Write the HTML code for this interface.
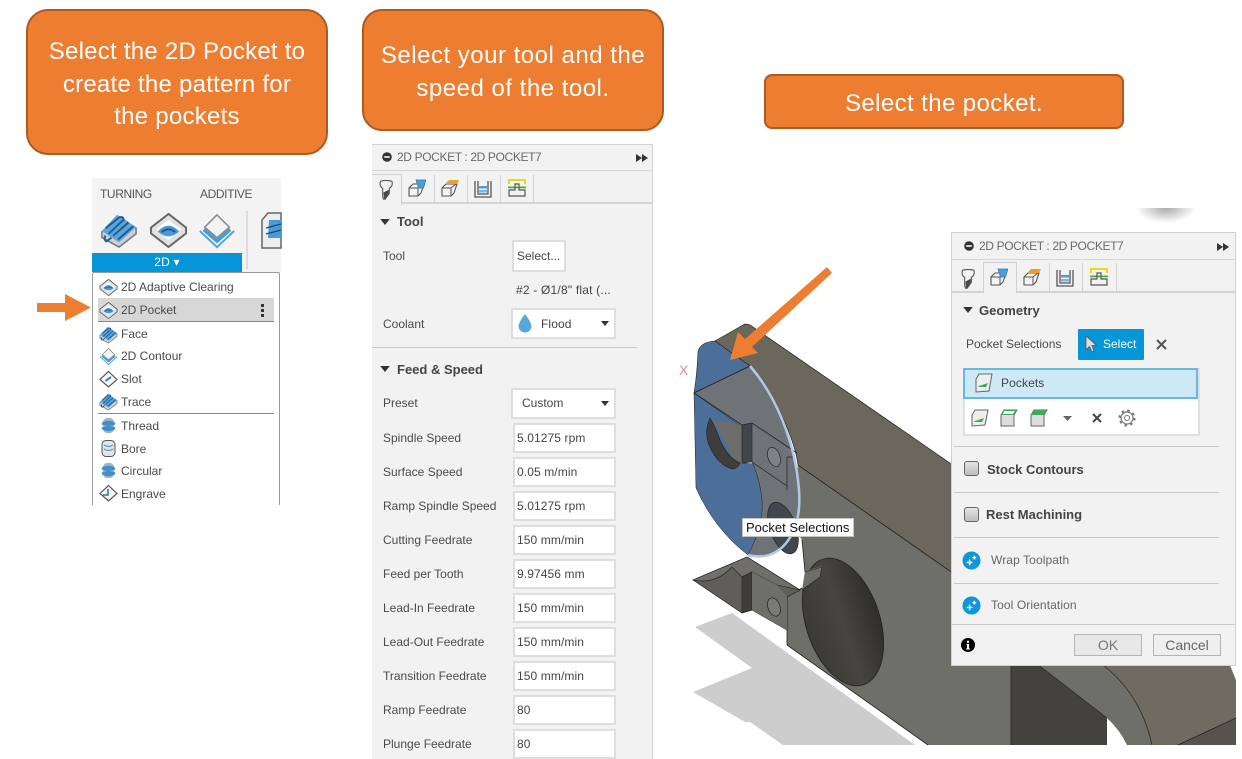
<!DOCTYPE html>
<html><head><meta charset="utf-8"><style>
html,body{margin:0;padding:0;background:#fff}
#p{position:relative;width:1242px;height:759px;overflow:hidden;background:#fff;font-family:"Liberation Sans",sans-serif}
#p div{position:absolute;box-sizing:border-box}
.c{background:#ed7d31;border:2px solid #ad5a22;color:#fff;font-size:24px;line-height:32.5px;text-align:center;letter-spacing:.25px}
.t{font-size:12px;line-height:14px;color:#4a4a4a;white-space:nowrap}
.m{font-size:12px;line-height:14px;color:#4a4a4a;white-space:nowrap;left:121px}
.b{font-weight:bold;font-size:13px;line-height:15px;color:#444;white-space:nowrap}
.i{left:513px;width:103px;height:30px;background:#fff;border:2px solid #dedede;font-size:12px;line-height:26px;color:#444;padding-left:2px;letter-spacing:.1px}
.l{background:#c8c8c8;height:1px}
.tb{font-size:12px;line-height:14px;color:#555;white-space:nowrap;letter-spacing:-.4px}
.h{font-size:12px;line-height:14px;color:#6a6a6a;white-space:nowrap;letter-spacing:-.37px}
svg{position:absolute;overflow:visible}
</style></head><body><div id="p">

<svg width="0" height="0" style="left:0;top:0"><defs>
<symbol id="hex" viewBox="0 0 20 20"><path d="M10 1.500L19 8.500V11.500L10 18.500L1 11.500V8.500Z" fill="#e2e2e2" stroke="#666" stroke-width="1"/><path d="M10 4.500L16.500 9.500L10 15L3.500 9.500Z" fill="#fafafa"/><path d="M4.500 10.500Q10 4.500 15.500 10.500Q10 15.500 4.500 10.500Z" fill="#4a9ad8"/><path d="M6.500 10.800Q10 8 13.500 10.800" fill="none" stroke="#1c5d8d" stroke-width="1"/></symbol>
<symbol id="hatch" viewBox="0 0 20 20"><path d="M1 11L10 3L19 9V12L10 19L1 14Z" fill="#d0d0d0" stroke="#777" stroke-width=".8"/><path d="M1 10.500L9 2L19 8.500L10 16.500Z" fill="#5aa5de"/><path d="M3 9L10 3.500Q12 2.500 12.500 4.500L4.500 12M7 13L15 6M9.500 15L17.500 8M3 13Q1.500 15 3.500 16L6 14" stroke="#1c5d8d" stroke-width="1" fill="none"/></symbol>
<symbol id="cont" viewBox="0 0 20 20"><path d="M1 10L10 18.500L19 10" fill="none" stroke="#4aa5e6" stroke-width="1"/><path d="M10 1.500L16.500 8L10 13.500L3.500 8Z" fill="#f3f3f3" stroke="#888" stroke-width=".8"/><path d="M3.500 8.500L10 14L16.500 8.500L17.500 10L10 16.500L2.500 10Z" fill="#4a9ad8"/></symbol>
<symbol id="thr" viewBox="0 0 20 20"><rect x="4" y="2" width="12" height="16" rx="5" fill="#a4b4c0"/><path d="M3 7Q10 3 17 7V9Q10 12 3 9ZM3 12Q10 9 17 12V14Q10 18 3 14Z" fill="#3f8fce"/></symbol>
<symbol id="tool" viewBox="0 0 24 24"><path d="M5.500 1.500Q12 -.5 19 1.500Q20.500 5 18 8.500L16 10V16L11 23H9L8 20V10L6 8.500Q4 5 5.500 1.500Z" fill="#f2f2f2" stroke="#555" stroke-width="1.300"/><path d="M9 15L15.500 11.500V16L11 22.500H9.500Z" fill="#4a4a4a"/></symbol>
<symbol id="geo" viewBox="0 0 18 18"><path d="M1 9L5 5H16L13 14L10 17H1Z" fill="#f4f4f4" stroke="#555" stroke-width="1.100"/><path d="M1 9H10V17M10 9L15 4" fill="none" stroke="#555" stroke-width="1"/><path d="M8 1H18L15.500 9L10.500 9Z" fill="#4c9ed9" stroke="#2b77b1" stroke-width=".7"/></symbol>
<symbol id="hgt" viewBox="0 0 18 18"><path d="M1 9L5 5H16L13 14L10 17H1Z" fill="#f4f4f4" stroke="#555" stroke-width="1.100"/><path d="M1 9H10V17M10 9L15 5" fill="none" stroke="#555" stroke-width="1"/><path d="M4 5L8 1H18L16 5Z" fill="#ee9f2b"/></symbol>
<symbol id="pas" viewBox="0 0 18 18"><path d="M1 1V17H17V1M4 1V14H14V1" fill="none" stroke="#555" stroke-width="1.300"/><rect x="5" y="6" width="8" height="2.500" fill="#4c9ed9"/><rect x="5" y="10" width="8" height="2.500" fill="#7fb4dc"/></symbol>
<symbol id="lnk" viewBox="0 0 18 18"><path d="M1 5V1H17V5" fill="none" stroke="#e6d800" stroke-width="1.800"/><rect x="0" y="7.500" width="18" height="1.800" fill="#52a849"/><path d="M1 11H7V5H11V11H17V17H1Z" fill="none" stroke="#555" stroke-width="1.200"/></symbol>
<symbol id="tri" viewBox="0 0 8 5"><path d="M0 0H8L4 5Z" fill="#333"/></symbol>
<symbol id="plus" viewBox="0 0 20 20"><circle cx="10" cy="10" r="9.500" fill="#0f96d9"/><path d="M8 9V15M5 12H11M13 5V9M11 7H15" stroke="#fff" stroke-width="1.500"/></symbol>
</defs></svg>

<!-- callouts -->
<div class="c" style="left:26px;top:9px;width:302px;height:146px;border-radius:22px;padding-top:25px">Select the 2D Pocket to<br>create the pattern for<br>the pockets</div>
<div class="c" style="left:362px;top:9px;width:302px;height:122px;border-radius:20px;padding-top:29px;letter-spacing:.5px">Select your tool and the<br>speed of the tool.</div>
<div class="c" style="left:764px;top:74px;width:360px;height:55px;border-radius:8px;padding-top:12px;letter-spacing:.4px">Select the pocket.</div>

<!-- toolbar -->
<div style="left:92px;top:178px;width:189px;height:95px;background:#f3f3f3"></div>
<div class="tb" style="left:100px;top:187px">TURNING</div>
<div class="tb" style="left:200px;top:187px">ADDITIVE</div>
<svg style="left:100px;top:211px" width="38" height="38"><use href="#hatch" width="38" height="38"/></svg>
<svg style="left:149px;top:211px" width="39" height="39"><use href="#hex" width="39" height="39"/></svg>
<svg style="left:198px;top:212px" width="38" height="38"><use href="#cont" width="38" height="38"/></svg>
<div style="left:246px;top:211px;width:2px;height:58px;background:#ddd"></div>
<svg style="left:260px;top:212px;width:21px;height:36px" viewBox="0 0 21 36"><path d="M8 1H21V36H2V8Z" fill="#eee" stroke="#666" stroke-width="1.500"/><path d="M9 8H21V26H8Z" fill="#4a9ad8"/><path d="M6 16L21 12M6 22L21 18" stroke="#1c4a70" stroke-width="1.200"/></svg>
<div style="left:92px;top:253px;width:150px;height:19px;background:#0696d7;color:#fff;font-size:12px;line-height:19px;text-align:center;letter-spacing:.2px">2D ▾</div>
<div style="left:92px;top:272px;width:188px;height:233px;background:#fff;border:1px solid #9a9a9a;border-bottom:none;border-radius:2px 2px 0 0"></div>
<div style="left:98px;top:298px;width:176px;height:24px;background:#d7d7d7;border-bottom:1px solid #888"></div>
<svg style="left:261px;top:304px" width="3" height="14"><path d="M0 0h3v3H0zM0 5h3v3H0zM0 10h3v3H0z" fill="#333"/></svg>
<div class="l" style="left:98px;top:413px;width:176px;background:#888"></div>
<div class="m" style="top:280px">2D Adaptive Clearing</div>
<div class="m" style="top:303px">2D Pocket</div>
<div class="m" style="top:327px">Face</div>
<div class="m" style="top:349px">2D Contour</div>
<div class="m" style="top:372px">Slot</div>
<div class="m" style="top:395px">Trace</div>
<div class="m" style="top:419px">Thread</div>
<div class="m" style="top:442px">Bore</div>
<div class="m" style="top:464px">Circular</div>
<div class="m" style="top:487px">Engrave</div>
<svg style="left:99px;top:278px" width="19" height="19"><use href="#hex" width="19" height="19"/></svg>
<svg style="left:99px;top:301px" width="19" height="19"><use href="#hex" width="19" height="19"/></svg>
<svg style="left:99px;top:325px" width="19" height="19"><use href="#hatch" width="19" height="19"/></svg>
<svg style="left:99px;top:347px" width="19" height="19"><use href="#cont" width="19" height="19"/></svg>
<svg style="left:99px;top:370px" width="19" height="19"><path d="M9.500 1.500L18 9.500L9.500 17L1 9.500Z" fill="#f5f5f5" stroke="#555" stroke-width="1.200"/><path d="M6.500 11L12 7" stroke="#2d7fbf" stroke-width="2"/></svg>
<svg style="left:99px;top:392px" width="19" height="19"><use href="#hatch" width="19" height="19"/></svg>
<svg style="left:99px;top:416px" width="19" height="19"><use href="#thr" width="19" height="19"/></svg>
<svg style="left:99px;top:439px" width="19" height="19"><rect x="3" y="1.500" width="13" height="16" rx="4" fill="#dfe4e8" stroke="#555"/><path d="M5 6Q9.500 9 14 6M5 10Q9.500 13 14 10" stroke="#4a9ad8" stroke-width="1.200" fill="none"/></svg>
<svg style="left:99px;top:461px" width="19" height="19"><use href="#thr" width="19" height="19"/></svg>
<svg style="left:99px;top:484px" width="19" height="19"><path d="M9.500 1.500L18 9.500L9.500 17L1 9.500Z" fill="#f5f5f5" stroke="#555" stroke-width="1.200"/><path d="M9 5V11H4" stroke="#2d6fa8" stroke-width="1.500" fill="none"/></svg>
<svg style="left:37px;top:294px" width="55" height="27"><path d="M0 9H28V0L54 13.500L28 27V18H0Z" fill="#ed7d31"/></svg>

<!-- middle panel -->
<div style="left:372px;top:144px;width:281px;height:620px;background:#f2f2f2;border:1px solid #d2d2d2;border-left:none"></div>
<div style="left:372px;top:170px;width:280px;height:1px;background:#d6d6d6"></div>
<svg style="left:382px;top:152px" width="10" height="10"><circle cx="5" cy="5" r="4.800" fill="#333"/><rect x="2.300" y="4.200" width="5.400" height="1.600" fill="#fff"/></svg>
<div class="h" style="left:397px;top:150px">2D POCKET : 2D POCKET7</div>
<svg style="left:636px;top:154px" width="12" height="8"><path d="M0 0L6 4L0 8ZM6 0L12 4L6 8Z" fill="#333"/></svg>
<div style="left:372px;top:202px;width:280px;height:2px;background:#d4d4d4"></div>
<div style="left:372px;top:174px;width:30px;height:31px;background:#f2f2f2;border:1px solid #d0d0d0;border-bottom:none;border-left:none"></div>
<div style="left:434px;top:175px;width:1px;height:27px;background:#d4d4d4"></div>
<div style="left:467px;top:175px;width:1px;height:27px;background:#d4d4d4"></div>
<div style="left:500px;top:175px;width:1px;height:27px;background:#d4d4d4"></div>
<div style="left:533px;top:175px;width:1px;height:27px;background:#d4d4d4"></div>
<svg style="left:376px;top:180px" width="20" height="20"><use href="#tool" width="20" height="20"/></svg>
<svg style="left:408px;top:179px" width="18" height="18"><use href="#geo" width="18" height="18"/></svg>
<svg style="left:441px;top:179px" width="18" height="18"><use href="#hgt" width="18" height="18"/></svg>
<svg style="left:474px;top:180px" width="18" height="18"><use href="#pas" width="18" height="18"/></svg>
<svg style="left:508px;top:179px" width="18" height="18"><use href="#lnk" width="18" height="18"/></svg>

<svg style="left:380px;top:219px" width="10" height="6"><use href="#tri" width="10" height="6"/></svg>
<div class="b" style="left:397px;top:214px">Tool</div>
<div class="t" style="left:383px;top:249px">Tool</div>
<div class="i" style="left:512px;top:240px;width:54px;height:32px;line-height:28px;padding-left:3px;letter-spacing:0">Select...</div>
<div class="t" style="left:516px;top:283px;color:#444;letter-spacing:.2px">#2 - Ø1/8" flat (...</div>
<div class="t" style="left:383px;top:317px">Coolant</div>
<div class="i" style="left:511px;top:308px;width:105px;height:31px;line-height:28px;padding-left:28px">Flood</div>
<svg style="left:518px;top:314px" width="14" height="19"><path d="M7 0Q13 8 13.500 12A6.500 6.500 0 0 1 .5 12Q1 8 7 0Z" fill="#58a6dc"/></svg>
<svg style="left:601px;top:321px" width="8" height="5"><use href="#tri" width="8" height="5"/></svg>
<div class="l" style="left:372px;top:347px;width:265px"></div>
<svg style="left:380px;top:366px" width="10" height="6"><use href="#tri" width="10" height="6"/></svg>
<div class="b" style="left:397px;top:362px">Feed &amp; Speed</div>

<div class="t" style="left:383px;top:396px">Preset</div>
<div class="i" style="left:511px;top:388px;width:105px;height:31px;line-height:27px;padding-left:9px;letter-spacing:0">Custom</div>
<svg style="left:601px;top:401px" width="8" height="5"><use href="#tri" width="8" height="5"/></svg>
<div class="t" style="left:383px;top:431px">Spindle Speed</div><div class="i" style="top:423px">5.01275 rpm</div>
<div class="t" style="left:383px;top:465px">Surface Speed</div><div class="i" style="top:457px">0.05 m/min</div>
<div class="t" style="left:383px;top:499px">Ramp Spindle Speed</div><div class="i" style="top:491px">5.01275 rpm</div>
<div class="t" style="left:383px;top:533px">Cutting Feedrate</div><div class="i" style="top:525px">150 mm/min</div>
<div class="t" style="left:383px;top:567px">Feed per Tooth</div><div class="i" style="top:559px">9.97456 mm</div>
<div class="t" style="left:383px;top:601px">Lead-In Feedrate</div><div class="i" style="top:593px">150 mm/min</div>
<div class="t" style="left:383px;top:635px">Lead-Out Feedrate</div><div class="i" style="top:627px">150 mm/min</div>
<div class="t" style="left:383px;top:669px">Transition Feedrate</div><div class="i" style="top:661px">150 mm/min</div>
<div class="t" style="left:383px;top:703px">Ramp Feedrate</div><div class="i" style="top:695px">80</div>
<div class="t" style="left:383px;top:737px">Plunge Feedrate</div><div class="i" style="top:729px">80</div>

<!-- model -->
<svg style="left:0;top:0" width="1242" height="759">
<defs><radialGradient id="sh"><stop offset="0" stop-color="#aaa"/><stop offset="1" stop-color="#fff"/></radialGradient>
<linearGradient id="hl" x1="0" y1="0" x2="1" y2="0"><stop offset="0" stop-color="#3b3a36"/><stop offset=".5" stop-color="#46453f"/><stop offset="1" stop-color="#2f2e2a"/></linearGradient></defs>
<ellipse cx="1166" cy="208" rx="30" ry="15" fill="url(#sh)"/><rect x="1130" y="190" width="80" height="18" fill="#fff"/>
<path d="M695 627L732 613L915 745H783L750 722L745 722L693 692L752 668Z" fill="#cdcdcd"/>
<!-- side face -->
<path d="M798 465L960 578V665H1011V745H928L787 645V597L802 588L820 577L822 567L805 572L802 540L790 520Z" fill="#6e6f69"/>
<path d="M798 465L960 578M787 645L928 745M787 597V645M787 597L802 588M805 572L802 540M805 572L822 567" stroke="#222" stroke-width=".8" fill="none"/>
<!-- top face -->
<path d="M715 341L745 324L750 325L960 470V578L798 465C795 440 775 395 750 366Z" fill="#6b675c" stroke="#222" stroke-width=".7"/>
<!-- selected interior -->
<path d="M750 366C775 395 795 440 799 490C802 530 785 552 765 556Q755 557 748 555L762 500L742 427L694 393Z" fill="#6e7378"/>
<!-- blue -->
<path d="M715 341Q700 342 698 352Q697 375 694 393L750 366Z" fill="#4c6f99" stroke="#222" stroke-width=".6"/>
<path d="M694 393L696 488Q715 530 748 555Q764 525 762 500Q760 480 753 464L742 463V427Z" fill="#4c6f99" stroke="#222" stroke-width=".5"/>
<path d="M694 393L742 425L752 423L797 453M694 393L750 366" fill="none" stroke="#222" stroke-width=".8"/>
<path d="M712 420L742 425V463L735 462L722 435Z" fill="#6d6e69"/>
<path d="M710 418Q704 432 709 445Q718 466 733 469Q738 468 740 463Q728 458 720 440Q716 428 710 418Z" fill="#3f3e3a" stroke="#222" stroke-width=".6"/>
<path d="M742 425L752 423V462L742 463Z" fill="#41454b" stroke="#222" stroke-width=".6"/>
<path d="M752 462L787 486M787 457V490M787 457H795" fill="none" stroke="#222" stroke-width=".7"/>
<ellipse cx="774" cy="457" rx="6" ry="10" transform="rotate(-20 774 457)" fill="#7d8288" stroke="#222" stroke-width=".7"/>
<ellipse cx="783" cy="528" rx="13" ry="27" transform="rotate(-20 783 528)" fill="#42464f" stroke="#222" stroke-width=".7"/>
<path d="M750 366C775 395 795 440 799 490C802 530 785 552 765 556Q755 557 748 555" fill="none" stroke="#b4c8e2" stroke-width="2.500"/>
<!-- lower jaw -->
<path d="M693 580L747 557L800 590L787 597V630L752 610L742 613Z" fill="#5f5e58" stroke="#222" stroke-width=".7"/>
<path d="M693 580Q715 585 732 567L742 577L752 572L777 585L800 590L747 557Z" fill="#6f6e68" stroke="#222" stroke-width=".6"/>
<path d="M742 577L752 572V610L742 613Z" fill="#3e3d39" stroke="#222" stroke-width=".6"/>
<path d="M752 572L777 585L787 597V630L752 610Z" fill="#6e6f69"/>
<ellipse cx="774" cy="607" rx="6" ry="9.500" transform="rotate(-20 774 607)" fill="#7a7a74" stroke="#222" stroke-width=".7"/>
<ellipse cx="843" cy="622" rx="37" ry="66" transform="rotate(-18 843 622)" fill="url(#hl)" stroke="#222" stroke-width=".8"/>
<path d="M802 590L820 577L822 566L805 571Z" fill="#6e6f69"/>
<path d="M802 590L820 577L822 567L805 572" fill="none" stroke="#222" stroke-width=".6"/>
<!-- under panel -->
<path d="M1011 660H1032L1107 718V745H1011Z" fill="#44423c"/>
<path d="M1107 718L1127 745H1107Z" fill="#fff"/>
<path d="M1032 660H1096Q1140 690 1152 745H1127Q1120 730 1107 718Z" fill="#6e6f69"/>
<path d="M1096 660H1228L1236 680V718L1178 745H1152Q1140 690 1096 660Z" fill="#6f6b60"/>
<path d="M1178 745L1236 718V745Z" fill="#55534b"/>
<path d="M1011 660V745M1032 660L1107 718M1096 660Q1140 690 1152 745M1178 745L1236 718" fill="none" stroke="#222" stroke-width=".7"/>
<path d="M1228 660L1236 680V660Z" fill="#fff"/>
<!-- orange arrow -->
<path d="M827 267L832 273L752 347L758 353L730 360L738 332L745 339Z" fill="#ed7d31"/>
<text x="679" y="375" font-size="14" fill="#f08a90" font-family="Liberation Sans">X</text>
</svg>
<div style="left:742px;top:518px;width:112px;height:19px;background:#fff;border:1px solid #c4c4c4;font-size:13px;line-height:18px;color:#111;padding-left:3px;white-space:nowrap">Pocket Selections</div>

<!-- right panel -->
<div style="left:951px;top:232px;width:285px;height:434px;background:#f2f2f2;border:1px solid #d0d0d0"></div>
<div style="left:952px;top:259px;width:283px;height:1px;background:#d6d6d6"></div>
<svg style="left:964px;top:241px" width="10" height="10"><circle cx="5" cy="5" r="4.800" fill="#333"/><rect x="2.300" y="4.200" width="5.400" height="1.600" fill="#fff"/></svg>
<div class="h" style="left:979px;top:239px">2D POCKET : 2D POCKET7</div>
<svg style="left:1217px;top:243px" width="12" height="8"><path d="M0 0L6 4L0 8ZM6 0L12 4L6 8Z" fill="#333"/></svg>
<div style="left:952px;top:291px;width:283px;height:2px;background:#d4d4d4"></div>
<div style="left:983px;top:262px;width:34px;height:31px;background:#f2f2f2;border:1px solid #d0d0d0;border-bottom:none"></div>
<div style="left:1049px;top:263px;width:1px;height:28px;background:#d4d4d4"></div>
<div style="left:1082px;top:263px;width:1px;height:28px;background:#d4d4d4"></div>
<div style="left:1116px;top:263px;width:1px;height:28px;background:#d4d4d4"></div>
<svg style="left:958px;top:269px" width="20" height="20"><use href="#tool" width="20" height="20"/></svg>
<svg style="left:990px;top:268px" width="18" height="18"><use href="#geo" width="18" height="18"/></svg>
<svg style="left:1023px;top:268px" width="18" height="18"><use href="#hgt" width="18" height="18"/></svg>
<svg style="left:1056px;top:269px" width="18" height="18"><use href="#pas" width="18" height="18"/></svg>
<svg style="left:1090px;top:268px" width="18" height="18"><use href="#lnk" width="18" height="18"/></svg>

<svg style="left:963px;top:307px" width="10" height="6"><use href="#tri" width="10" height="6"/></svg>
<div class="b" style="left:979px;top:303px">Geometry</div>
<div class="t" style="left:966px;top:337px">Pocket Selections</div>
<div style="left:1078px;top:329px;width:66px;height:31px;background:#0696d7;border-radius:1px;color:#fff;font-size:12px;line-height:30px;padding-left:25px">Select</div>
<svg style="left:1085px;top:335px" width="12" height="19"><path d="M1 1V15L4.500 11.500L7 17L9 16L7 10.500H11.500Z" fill="#ddd" stroke="#555" stroke-width=".8"/></svg>
<svg style="left:1156px;top:339px" width="11" height="11"><path d="M1 1L10 10M10 1L1 10" stroke="#555" stroke-width="2"/></svg>
<div style="left:963px;top:368px;width:237px;height:68px;background:#fff;border:2px solid #e0e0e0"></div>
<div style="left:963px;top:368px;width:235px;height:31px;background:#cde9f6;border:2px solid #69b8e4;font-size:12px;line-height:27px;color:#444;padding-left:36px;letter-spacing:.1px">Pockets</div>
<svg style="left:974px;top:373px" width="19" height="20"><path d="M5 1H18L15 18L2 19V6Z" fill="#eee" stroke="#666"/><path d="M5 13L14 10L12 14H4Z" fill="#3cab5c"/></svg>
<svg style="left:970px;top:409px" width="19" height="18"><path d="M5 1H18L15 16L2 17V6Z" fill="#eee" stroke="#666"/><path d="M5 12L14 9L12 13H4Z" fill="#3cab5c"/></svg>
<svg style="left:999px;top:409px" width="19" height="18"><path d="M5 1H18L15 6V17H2V6Z" fill="#ddd" stroke="#666"/><path d="M5 1.500H17L14 5.500H3Z" fill="#fff" stroke="#3cab5c"/></svg>
<svg style="left:1029px;top:409px" width="19" height="18"><path d="M5 1H18L15 6V17H2V6Z" fill="#ddd" stroke="#666"/><path d="M5 1H18L15 6H2Z" fill="#3cab5c"/></svg>
<svg style="left:1063px;top:416px" width="9" height="5"><path d="M0 0H9L4.500 5Z" fill="#666"/></svg>
<svg style="left:1092px;top:413px" width="10" height="10"><path d="M1 1L9 9M9 1L1 9" stroke="#444" stroke-width="2"/></svg>
<svg style="left:1118px;top:409px" width="18" height="18"><circle cx="9" cy="9" r="6" fill="none" stroke="#777" stroke-width="1.200"/><circle cx="9" cy="9" r="2.500" fill="none" stroke="#777"/><circle cx="9" cy="9" r="7.500" fill="none" stroke="#777" stroke-width="2" stroke-dasharray="2.500 3.400"/></svg>
<div class="l" style="left:954px;top:446px;width:265px"></div>
<div style="left:964px;top:461px;width:15px;height:15px;background:linear-gradient(#e4e4e4,#bdbdbd);border:1px solid #666;border-radius:3px"></div>
<div class="b" style="left:987px;top:462px">Stock Contours</div>
<div class="l" style="left:954px;top:492px;width:265px"></div>
<div style="left:964px;top:507px;width:15px;height:15px;background:linear-gradient(#e4e4e4,#bdbdbd);border:1px solid #666;border-radius:3px"></div>
<div class="b" style="left:986px;top:507px">Rest Machining</div>
<div class="l" style="left:954px;top:537px;width:265px"></div>
<svg style="left:962px;top:551px" width="19" height="19"><use href="#plus" width="19" height="19"/></svg>
<div class="t" style="left:991px;top:553px;color:#666;letter-spacing:.1px">Wrap Toolpath</div>
<div class="l" style="left:954px;top:583px;width:265px"></div>
<svg style="left:962px;top:596px" width="19" height="19"><use href="#plus" width="19" height="19"/></svg>
<div class="t" style="left:991px;top:598px;color:#666;letter-spacing:.1px">Tool Orientation</div>
<div class="l" style="left:952px;top:624px;width:283px"></div>
<svg style="left:961px;top:638px" width="14" height="14"><circle cx="7" cy="7" r="7" fill="#000"/><path d="M5.500 6H8V10.500H9V11.500H5V10.500H6V7H5.500ZM6 2.700H8V4.700H6Z" fill="#fff"/></svg>
<div style="left:1074px;top:634px;width:68px;height:22px;background:#e8e8e8;border:1px solid #b4b4b4;color:#777;font-size:14px;line-height:20px;text-align:center">OK</div>
<div style="left:1153px;top:634px;width:68px;height:22px;background:#efefef;border:1px solid #b4b4b4;color:#666;font-size:14px;line-height:20px;text-align:center">Cancel</div>
</div></body></html>
